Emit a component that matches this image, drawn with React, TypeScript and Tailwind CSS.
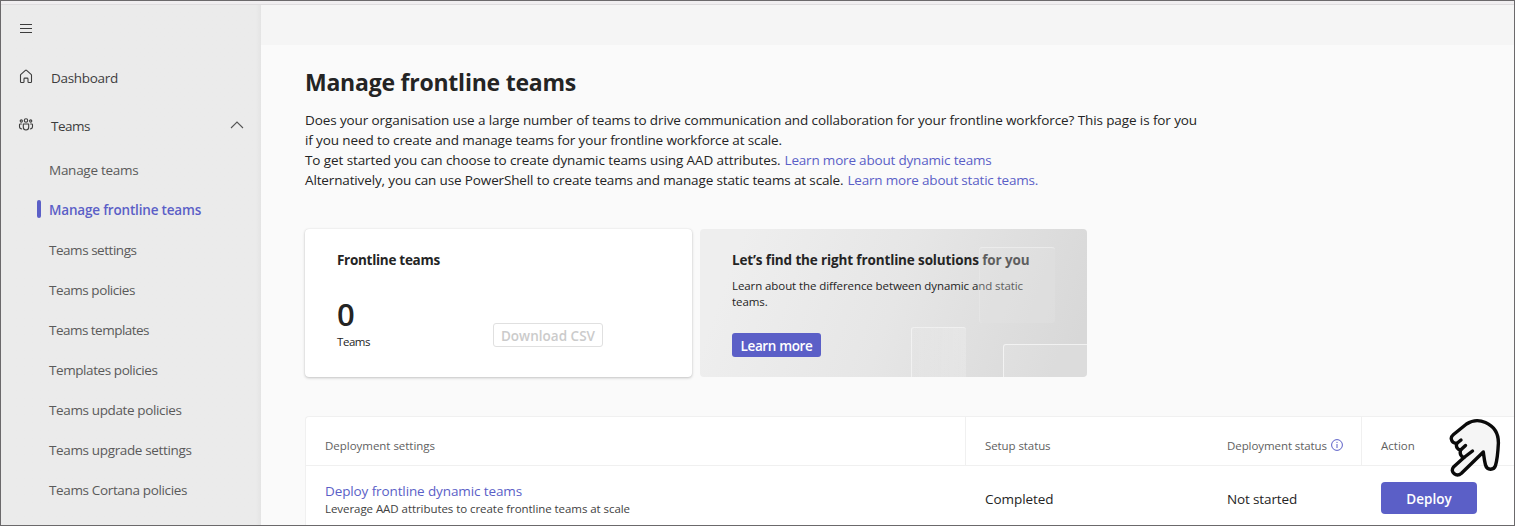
import type { ReactNode } from "react";

const subItems = [
  { label: "Manage teams", cls: "tracking-[-0.264px]" },
  { label: "Manage frontline teams", cls: "tracking-[-0.184px]", active: true },
  { label: "Teams settings", cls: "tracking-[-0.468px]" },
  { label: "Teams policies", cls: "tracking-[-0.432px]" },
  { label: "Teams templates", cls: "tracking-[-0.523px]" },
  { label: "Templates policies", cls: "tracking-[-0.422px]" },
  { label: "Teams update policies", cls: "tracking-[-0.369px]" },
  { label: "Teams upgrade settings", cls: "tracking-[-0.354px]" },
  { label: "Teams Cortana policies", cls: "tracking-[-0.354px]" },
];

function MenuIcon() {
  return (
    <svg width="12" height="10" viewBox="0 0 12 10" fill="none" stroke="#3d3d3d">
      <path d="M0 .5h12M0 4.5h12M0 8.5h12" />
    </svg>
  );
}

function HomeIcon() {
  return (
    <svg className="mb-0.5" width="14" height="15" viewBox="0 0 14 15" fill="none" stroke="#3d3d3d" strokeWidth="1.1" strokeLinejoin="round">
      <path d="M1.5 6.2Q1.5 5.7 1.9 5.3L6.4 1.4Q7 .9 7.6 1.4L12.1 5.3Q12.5 5.7 12.5 6.2V12.7Q12.5 13.5 11.700 13.5H9.8Q9 13.5 9 12.700V9.900Q9 9.100 8.200 9.100H5.800Q5 9.100 5 9.900V12.700Q5 13.500 4.200 13.500H2.300Q1.500 13.500 1.500 12.700Z" />
    </svg>
  );
}

function PeopleIcon() {
  return (
    <svg className="mb-0.5" width="16" height="13" viewBox="0 0 16 13" fill="none" stroke="#3d3d3d" strokeWidth="1.1">
      <circle cx="8" cy="2.500" r="1.700" />
      <circle cx="3.300" cy="3" r="1.100" />
      <circle cx="12.700" cy="3" r="1.100" />
      <path d="M5.300 6H10.700V9.300A2.700 2.700 0 0 1 5.300 9.300Z" strokeLinejoin="round" />
      <path d="M3.800 6H2.200Q1.500 6 1.500 6.700V8.600Q1.500 11 4.100 11M12.200 6H13.800Q14.500 6 14.500 6.700V8.600Q14.500 11 11.900 11" />
    </svg>
  );
}

function InfoIcon() {
  return (
    <svg className="-mt-0.5" width="12" height="12" viewBox="0 0 12 12" fill="none" stroke="#5b5fc7">
      <circle cx="6" cy="6" r="5.4" />
      <path d="M6 5v4M6 2.9v1.1" />
    </svg>
  );
}

function PointerHand() {
  return (
    <svg
      className="absolute top-[417px] left-[1445px]"
      width="56"
      height="62"
      viewBox="0 0 56 62"
      fill="#f5f5f5"
      stroke="#0a0a0a"
      strokeWidth="3.4"
      strokeLinecap="round"
      strokeLinejoin="round"
    >
      <path d="M5.300 21C5 19.500 6 17.800 7.500 16.500L20.500 6C26 2.400 33 1.600 39.500 4.500C48.500 8.500 52.500 15 52.400 25C52 33 51.500 41 49.500 47.500C48 52.500 41 52.500 39.500 47C38.300 42.500 38 39 37.300 34L15.500 55.200C10.500 59.500 3.500 54.300 7.500 49L18 39.500C14.800 38.500 13.500 35.500 14.600 32C11.500 31.500 9.700 29 10.700 25.500C8 25.300 5.800 23.500 5.300 21Z" />
      <path d="M10.700 25.500L15 22M14.600 32L19.500 27.500M18 39.500L26.500 33" fill="none" />
    </svg>
  );
}

function NavRow({ icon, children }: { icon: ReactNode; children: ReactNode }) {
  return (
    <div className="flex h-12 items-center text-[#3d3d3d]">
      <span className="flex w-[50px] justify-center">{icon}</span>
      {children}
    </div>
  );
}

export default function App() {
  return (
    <div className="relative flex h-[526px] w-[1515px] flex-col overflow-hidden border border-[#6b696b] bg-[#fafafa] font-['Open_Sans','Noto_Sans',sans-serif] text-[13.5px] whitespace-nowrap text-[#242424]">
      <div className="h-1 shrink-0 border-b border-[#dedcde] bg-[#f0eef0]" />
      <div className="flex min-h-0 flex-1">
        <aside className="w-[260px] shrink-0 bg-gradient-to-r from-[#ebebeb] from-98% to-[#e4e4e4]">
          <div className="flex h-12 w-[50px] items-center justify-center">
            <MenuIcon />
          </div>
          <NavRow icon={<HomeIcon />}>
            <span className="pt-0.5 tracking-[-0.297px]">Dashboard</span>
          </NavRow>
          <NavRow icon={<PeopleIcon />}>
            <span className="pt-0.5 tracking-[-0.5px]">Teams</span>
            <svg className="mr-[17px] ml-auto" width="14" height="8" viewBox="0 0 14 8" fill="none" stroke="#555" strokeWidth="1.1">
              <path d="M1 7l6-6 6 6" />
            </svg>
          </NavRow>
          <nav>
            {subItems.map((item) => (
              <div key={item.label} className="flex h-10 items-center pl-9">
                <span className={item.active ? "h-[18px] w-1 rounded-xs bg-[#5b5fc7]" : "w-1"} />
                <span className={`ml-2 pt-0.5 ${item.cls} ${item.active ? "font-semibold text-[#5b5fc7]" : "text-[#5a5a5a]"}`}>
                  {item.label}
                </span>
              </div>
            ))}
          </nav>
        </aside>
        <div className="flex min-w-0 flex-1 flex-col">
          <header className="h-10 shrink-0 bg-[#f5f5f5]" />
          <main className="pt-[21px] pl-11">
            <h1 className="text-[23px] leading-8 font-bold tracking-[-0.229px]">Manage frontline teams</h1>
            <div className="mt-3 leading-5">
              <p className="tracking-[-0.102px]">
                Does your organisation use a large number of teams to drive communication and collaboration for your
                frontline workforce? This page is for you
              </p>
              <p className="tracking-[-0.115px]">
                if you need to create and manage teams for your frontline workforce at scale.
              </p>
              <p className="flex gap-1">
                <span className="tracking-[-0.095px]">
                  To get started you can choose to create dynamic teams using AAD attributes.
                </span>
                <a className="tracking-[-0.188px] text-[#5b5fc7]">Learn more about dynamic teams</a>
              </p>
              <p className="flex gap-1">
                <span className="tracking-[-0.138px]">
                  Alternatively, you can use PowerShell to create teams and manage static teams at scale.
                </span>
                <a className="tracking-[-0.192px] text-[#5b5fc7]">Learn more about static teams.</a>
              </p>
            </div>

            <div className="mt-[39px] flex gap-2">
              <section className="flex h-[148px] w-[387px] flex-col rounded bg-white px-8 pt-[21px] shadow-[0_1px_3px_rgba(0,0,0,0.22),0_0_1px_rgba(0,0,0,0.12)]">
                <h2 className="leading-5 font-bold tracking-[-0.29px]">Frontline teams</h2>
                <div className="mt-6 flex">
                  <div className="w-[156px]">
                    <div className="text-[31px] leading-10 font-semibold">0</div>
                    <div className="text-[11.5px] leading-4 tracking-[-0.45px]">Teams</div>
                  </div>
                  <button className="mt-[29px] h-6 w-[110px] rounded-[3px] border border-[#e0e0e0] pt-px font-semibold leading-[22px] tracking-[0.02px] text-[#cbcbcb]">
                    Download CSV
                  </button>
                </div>
              </section>

              <section className="relative h-[148px] w-[387px] overflow-hidden rounded bg-[linear-gradient(110deg,#eeeeee_10%,#e6e6e6_50%,#d8d8d8_95%)] px-8 pt-[21px]">
                <h2 className="leading-5 font-bold tracking-[-0.135px]">Let’s find the right frontline solutions for you</h2>
                <p className="mt-2 text-[11.5px] leading-4 tracking-[-0.088px]">
                  Learn about the difference between dynamic and static
                  <br />
                  teams.
                </p>
                <button className="mt-[23px] h-6 w-[89px] rounded-[3px] bg-[#5b5fc7] pt-0.5 font-semibold leading-[22px] tracking-[-0.358px] text-white">
                  Learn more
                </button>
                <div className="absolute top-[18px] left-[279px] size-[76px] rounded-[3px] border-t border-l border-t-white/35 border-l-white/15 bg-[#e6e6e6]/30" />
                <div className="absolute top-[98px] left-[211px] h-[52px] w-[55px] rounded-t-[3px] border-t border-l border-white/40 bg-gradient-to-r from-white/5 to-white/20" />
                <div className="absolute top-[115px] left-[303px] h-[36px] w-[90px] rounded-tl-[3px] border-t border-l border-white/60 bg-white/10" />
              </section>
            </div>

            <section className="mt-[39px] h-[150px] rounded-tl border-t border-l border-[#f0f0f0] bg-white">
              <div className="grid h-[49px] grid-cols-[660px_242px_154px_1fr] border-b border-[#f0f0f0] text-[11.5px] text-[#616161]">
                <div className="flex items-center border-r border-[#f0f0f0] pt-[9px] pl-[19px] tracking-[-0.025px]">Deployment settings</div>
                <div className="flex items-center pt-[9px] pl-[19px] tracking-[-0.087px]">Setup status</div>
                <div className="flex items-center gap-1 border-r border-[#f0f0f0] pt-[9px] pl-[19px] tracking-[-0.074px]">
                  Deployment status
                  <InfoIcon />
                </div>
                <div className="flex items-center pt-[9px] pl-[19px]">Action</div>
              </div>
              <div className="grid h-[67px] grid-cols-[660px_242px_154px_1fr] items-center">
                <div className="flex flex-col pb-0.5 pl-[19px]">
                  <a className="leading-5 tracking-[-0.113px] text-[#5b5fc7]">Deploy frontline dynamic teams</a>
                  <span className="text-[11.5px] leading-4 tracking-[-0.059px] text-[#424242]">
                    Leverage AAD attributes to create frontline teams at scale
                  </span>
                </div>
                <div className="pl-[19px] tracking-[-0.058px]">Completed</div>
                <div className="pl-[19px] tracking-[-0.138px]">Not started</div>
                <div className="pb-[3px] pl-[19px]">
                  <button className="block h-8 w-24 rounded bg-[#5b5fc7] pt-0.5 font-semibold text-white">Deploy</button>
                </div>
              </div>
            </section>
          </main>
        </div>
      </div>
      <PointerHand />
    </div>
  );
}
